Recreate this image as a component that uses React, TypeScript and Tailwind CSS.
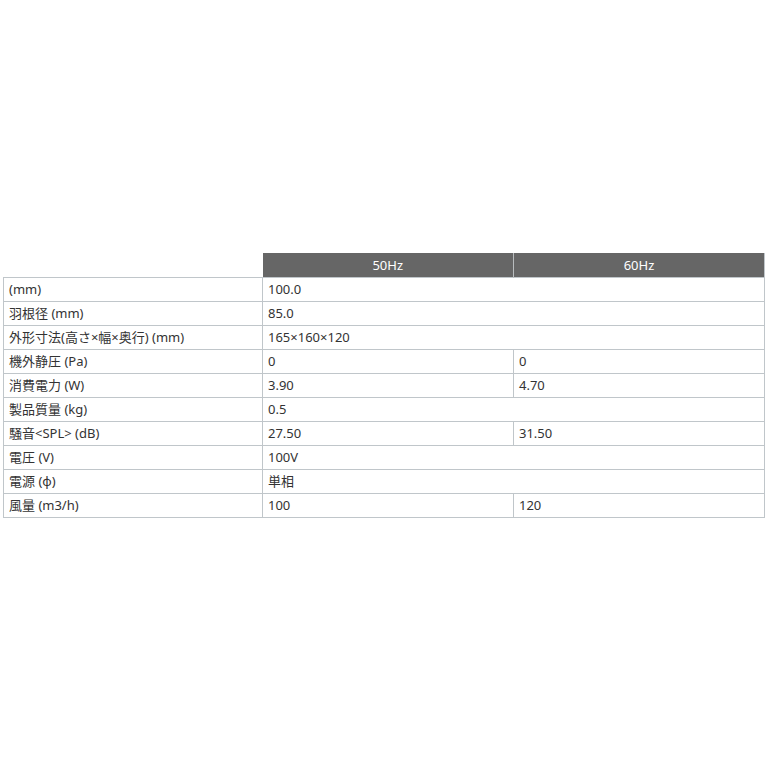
import React from "react";

const rows: [string, string, string | null][] = [
  ["(mm)", "100.0", null],
  ["羽根径 (mm)", "85.0", null],
  ["外形寸法(高さ×幅×奥行) (mm)", "165×160×120", null],
  ["機外静圧 (Pa)", "0", "0"],
  ["消費電力 (W)", "3.90", "4.70"],
  ["製品質量 (kg)", "0.5", null],
  ["騒音<SPL> (dB)", "27.50", "31.50"],
  ["電圧 (V)", "100V", null],
  ["電源 (φ)", "単相", null],
  ["風量 (m3/h)", "100", "120"],
];

const cell = "border border-[#c0c6ca] pl-[5px] pt-0 pb-[2px] leading-[20px] align-middle";

export default function App() {
  return (
    <div
      className="w-[768px] h-[768px] bg-white pt-[253px] pl-[3px] text-[#333] text-[13px]"
      style={{ fontFamily: '"Noto Sans", "Noto Sans CJK JP", sans-serif' }}
    >
      <table className="border-collapse table-fixed w-[761px]">
        <colgroup>
          <col className="w-[259px]" />
          <col className="w-[251px]" />
          <col className="w-[251px]" />
        </colgroup>
        <thead>
          <tr className="h-[24px]">
            <th className="p-0"></th>
            <th className="bg-[#666666] text-white font-normal text-center p-0 border-r border-r-[#b8bcbe] leading-[24px]">
              50Hz
            </th>
            <th className="bg-[#666666] text-white font-normal text-center p-0 border-r border-r-[#c0c6ca] leading-[24px]">
              60Hz
            </th>
          </tr>
        </thead>
        <tbody>
          {rows.map(([label, a, b], i) => (
            <tr key={i} className="h-[24px]">
              <td className={cell + " whitespace-nowrap"}>{label}</td>
              {b === null ? (
                <td colSpan={2} className={cell}>
                  {a}
                </td>
              ) : (
                <>
                  <td className={cell}>{a}</td>
                  <td className={cell}>{b}</td>
                </>
              )}
            </tr>
          ))}
        </tbody>
      </table>
    </div>
  );
}
